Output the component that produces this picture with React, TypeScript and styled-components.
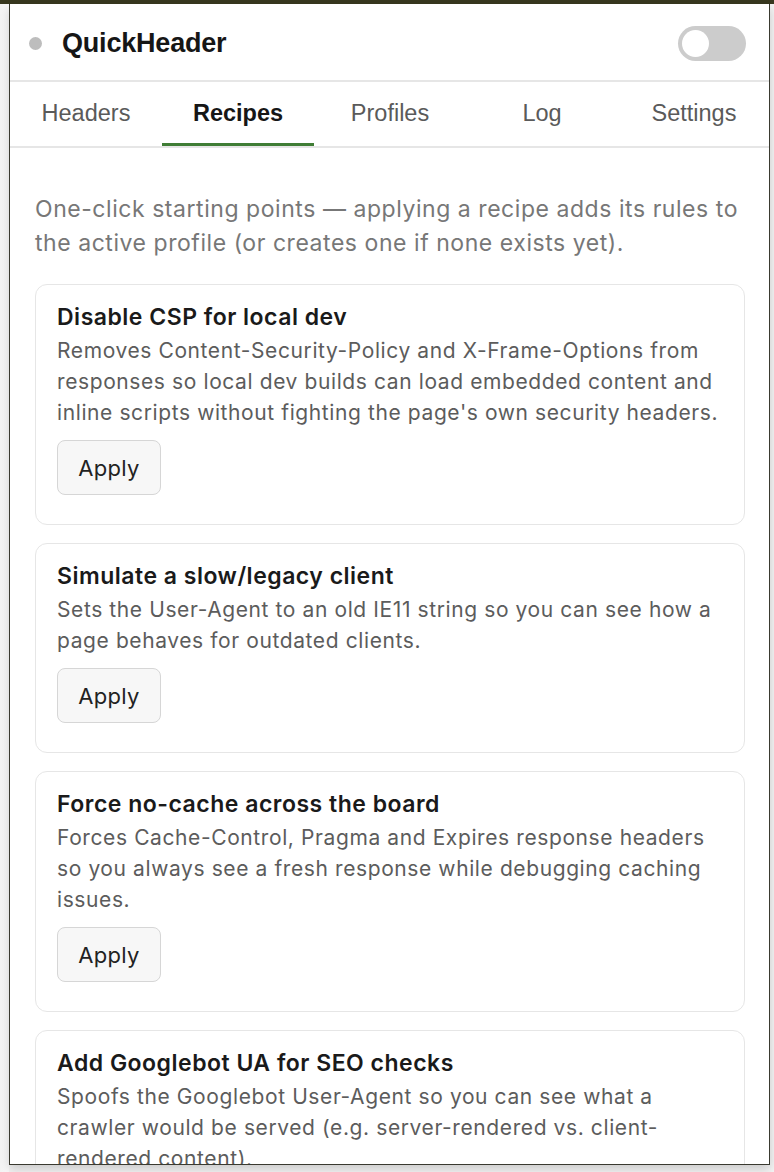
import React, { useState } from "react";
import styled, { createGlobalStyle } from "styled-components";

const GlobalStyle = createGlobalStyle`
  html, body {
    margin: 0;
    padding: 0;
    background: #f2f2f2;
    overflow: hidden;
  }
  * {
    box-sizing: border-box;
  }
`;

type Recipe = {
  id: string;
  title: string;
  description: string;
};

const recipes: Recipe[] = [
  {
    id: "csp",
    title: "Disable CSP for local dev",
    description:
      "Removes Content-Security-Policy and X-Frame-Options from responses so local dev builds can load embedded content and inline scripts without fighting the page's own security headers.",
  },
  {
    id: "legacy",
    title: "Simulate a slow/legacy client",
    description:
      "Sets the User-Agent to an old IE11 string so you can see how a page behaves for outdated clients.",
  },
  {
    id: "nocache",
    title: "Force no-cache across the board",
    description:
      "Forces Cache-Control, Pragma and Expires response headers so you always see a fresh response while debugging caching issues.",
  },
  {
    id: "googlebot",
    title: "Add Googlebot UA for SEO checks",
    description:
      "Spoofs the Googlebot User-Agent so you can see what a crawler would be served (e.g. server-rendered vs. client-rendered content).",
  },
];

const tabs = ["Headers", "Recipes", "Profiles", "Log", "Settings"];

export default function App() {
  const [active, setActive] = useState("Recipes");
  const [enabled, setEnabled] = useState(false);

  return (
    <Screen>
      <GlobalStyle />
      <Toolbar />
      <Popup>
        <Header>
          <Brand>
            <StatusDot on={enabled} />
            <Title>QuickHeader</Title>
          </Brand>
          <Toggle on={enabled} onClick={() => setEnabled(!enabled)}>
            <Knob on={enabled} />
          </Toggle>
        </Header>
        <TabBar>
          {tabs.map((t) => (
            <Tab key={t} active={t === active} onClick={() => setActive(t)}>
              {t}
            </Tab>
          ))}
        </TabBar>
        <Content>
          <Intro>
            One-click starting points — applying a recipe adds its rules to
            the active profile (or creates one if none exists yet).
          </Intro>
          <RecipeList>
            {recipes.map((r) => (
              <RecipeCard key={r.id}>
                <RecipeTitle>{r.title}</RecipeTitle>
                <RecipeText>{r.description}</RecipeText>
                <ApplyButton>Apply</ApplyButton>
              </RecipeCard>
            ))}
          </RecipeList>
        </Content>
      </Popup>
    </Screen>
  );
}

const Screen = styled.div`
  width: 774px;
  height: 1172px;
  background: linear-gradient(to right, #f4f4f4 0, #fafafa 9px, #f4f4f4 9px);
  overflow: hidden;
`;

const Toolbar = styled.div`
  height: 4px;
  background: #38381f;
`;

const Popup = styled.div`
  margin-left: 9px;
  width: 761px;
  height: 1161px;
  background: #fff;
  border: 1px solid #3a3a30;
  border-top: none;
  box-shadow: 0 4px 10px rgba(0, 0, 0, 0.18);
  display: flex;
  flex-direction: column;
  overflow: hidden;
`;

const Header = styled.header`
  height: 78px;
  display: flex;
  align-items: center;
  justify-content: space-between;
  padding: 2px 23px 0 19px;
  border-bottom: 2px solid #e6e6e6;
  flex-shrink: 0;
`;

const Brand = styled.div`
  display: flex;
  align-items: center;
  gap: 20px;
`;

const StatusDot = styled.span<{ on: boolean }>`
  width: 13px;
  height: 13px;
  border-radius: 50%;
  background: ${({ on }) => (on ? "#3f7d35" : "#bdbdbd")};
`;

const Title = styled.h1`
  margin: 0;
  font-family: "Liberation Sans", Arial, sans-serif;
  font-size: 27px;
  font-weight: 700;
  color: #161616;
  letter-spacing: -0.2px;
`;

const Toggle = styled.button<{ on: boolean }>`
  width: 68px;
  height: 35px;
  border: none;
  border-radius: 18px;
  padding: 4px;
  background: ${({ on }) => (on ? "#3f7d35" : "#cccccc")};
  display: flex;
  justify-content: ${({ on }) => (on ? "flex-end" : "flex-start")};
  cursor: pointer;
`;

const Knob = styled.span<{ on: boolean }>`
  width: 27px;
  height: 27px;
  border-radius: 50%;
  background: #fff;
`;

const TabBar = styled.nav`
  display: grid;
  grid-template-columns: repeat(5, 152px);
  height: 66px;
  border-bottom: 2px solid #e6e6e6;
  flex-shrink: 0;
`;

const Tab = styled.button<{ active: boolean }>`
  background: none;
  border: none;
  border-bottom: 3px solid ${({ active }) => (active ? "#3f7d35" : "transparent")};
  padding: 1px 0 0;
  font-family: "Liberation Sans", Arial, sans-serif;
  font-size: 23.5px;
  font-weight: ${({ active }) => (active ? 700 : 400)};
  color: ${({ active }) => (active ? "#161616" : "#5a5a5a")};
  cursor: pointer;
`;

const Content = styled.main`
  padding: 44px 24px 0 25px;
  font-family: Inter, "Noto Sans", sans-serif;
`;

const Intro = styled.p`
  margin: 0 0 24px;
  font-size: 23px;
  letter-spacing: 0.55px;
  line-height: 34px;
  color: #777;
`;

const RecipeList = styled.div`
  display: flex;
  flex-direction: column;
  gap: 18px;
`;

const RecipeCard = styled.section`
  border: 1.5px solid #e6e6e6;
  border-radius: 12px;
  padding: 18px 21px 29px;
`;

const RecipeTitle = styled.h2`
  margin: 0;
  font-size: 23px;
  letter-spacing: 0.5px;
  line-height: 28px;
  font-weight: 600;
  color: #1a1a1a;
`;

const RecipeText = styled.p`
  margin: 4px 0 12px;
  font-size: 21px;
  letter-spacing: 0.6px;
  line-height: 31px;
  color: #5c5c5c;
`;

const ApplyButton = styled.button`
  width: 104px;
  height: 55px;
  border: 1.5px solid #d6d6d6;
  border-radius: 8px;
  background: #f7f7f7;
  font-family: Inter, "Noto Sans", sans-serif;
  font-size: 22px;
  letter-spacing: 0.3px;
  color: #222;
  cursor: pointer;
`;
